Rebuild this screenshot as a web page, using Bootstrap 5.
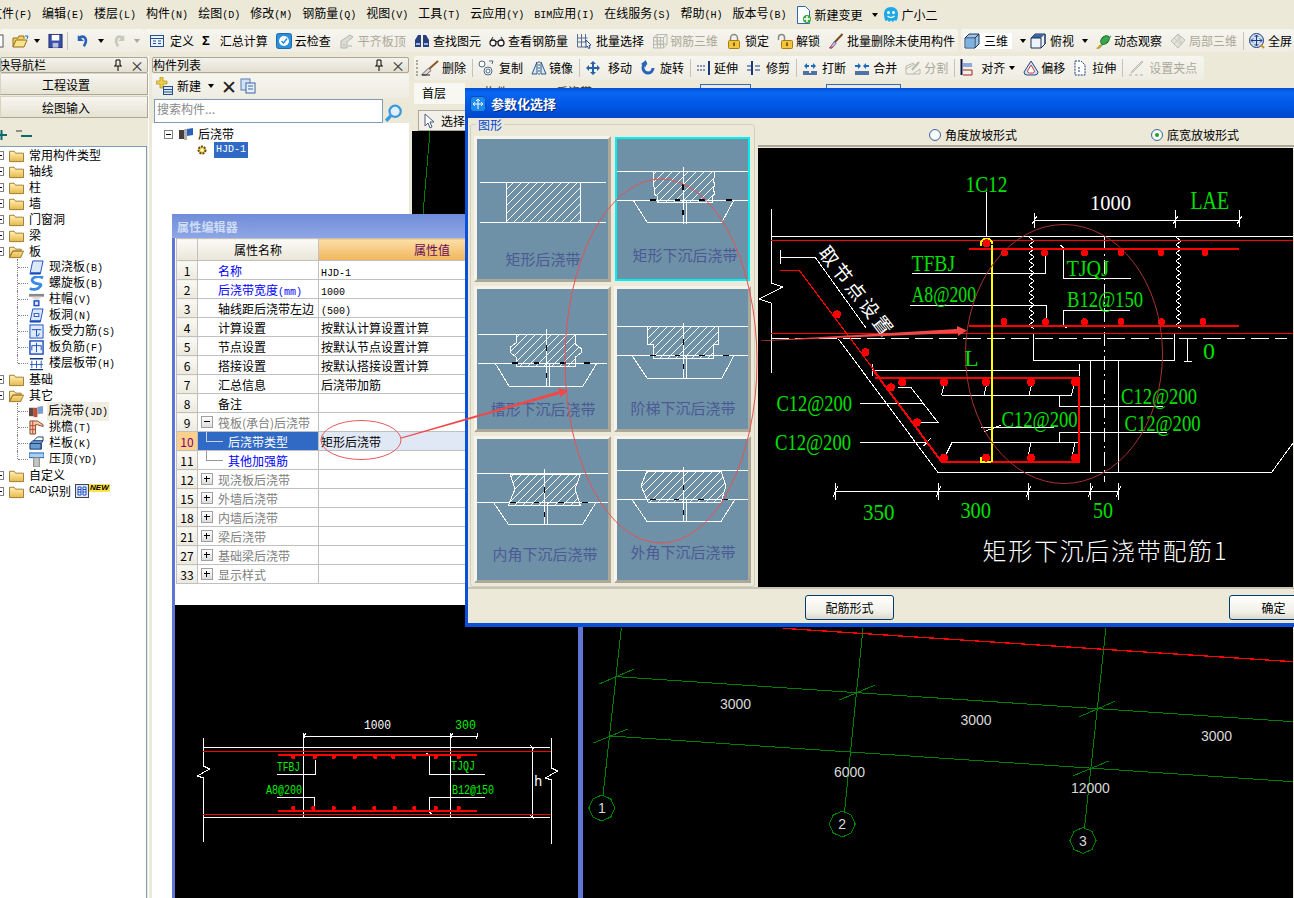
<!DOCTYPE html>
<html lang="zh-CN">
<head>
<meta charset="UTF-8">
<title>钢筋算量 - 后浇带</title>
<link href="https://cdn.jsdelivr.net/npm/bootstrap@5.3.2/dist/css/bootstrap.min.css" rel="stylesheet">
<style>
html,body{margin:0;height:898px;overflow:hidden}
body{position:relative;width:1294px;background:#ece9d8;color:#000;font:12px/16px "Noto Sans CJK SC","Liberation Sans",sans-serif}
svg{display:block;flex:none}
.gl-key{font:10px/16px "Liberation Mono",monospace}
.gl-menubar{height:29px;margin-left:-10px;gap:10px;white-space:nowrap}
.gl-menubar .gl-ic{margin-right:-8px}
.gl-menubar .gl-ic2{margin-left:-5px}
.gl-toolrow{height:27px;white-space:nowrap}
.gl-group{height:23px;background:linear-gradient(#f6f5ef,#efede2);border-radius:3px}
.gl-first{width:144px;flex:none}
.gl-mid{width:814px;flex:none;padding-left:5px;margin-right:3px}
.gl-last{flex:1;min-width:0;padding-left:3px}
.gl-tool{margin-right:8px;gap:2px;flex:none}
.gl-off{color:#aca899}
.gl-sep{width:1px;height:18px;background:#c5c2b8;margin:0 5px 0 -2px;flex:none}
.gl-drop{width:0;height:0;border:3px solid transparent;border-top:4px solid #000;border-bottom:0;flex:none}
.gl-drop-off{border-top-color:#aca899}
.gl-sigma{font:700 13px/16px "Liberation Sans",sans-serif}
.gl-work{height:842px}
.gl-left{width:148px}
.gl-titlebar{height:16px;margin-top:1px;border:1px solid #aca899;border-radius:2px;background:linear-gradient(#f4f3ec,#e3e0d0);padding-right:3px;line-height:14px;white-space:nowrap}
.gl-titlebar .gl-cross{margin-left:7px;font-size:14px;color:#333}
.gl-titleclip{margin-left:-3px}
.gl-navbtn{height:22px;border:1px solid #d8d4c4;border-bottom-color:#aca899;border-right-color:#aca899;background:linear-gradient(#f7f6f0,#e6e3d3);margin-bottom:1px;text-align:center;line-height:21px;padding:0 16px 0 0}
.gl-navtools{height:27px;padding:4px 0 0 0;gap:7px;color:#333}
.gl-tree{background:#fff;border:1px solid #7f9db9;border-left:0;border-bottom:0;margin:0 1px 0 0;padding:0;flex:1;list-style:none}
.gl-node{height:16px;white-space:nowrap}
.gl-box{width:9px;height:9px;border:1px solid #808080;background:#fff;margin:0 5px 0 -5px;flex:none;position:relative}
.gl-box::after{content:"";position:absolute;left:1px;right:1px;top:3px;height:1px;background:#000}
.gl-folder{margin-right:5px}
.gl-kids{list-style:none;margin:0;padding:0}
.gl-kid{position:relative;padding-left:29px;gap:5px}
.gl-kid::before{content:"";position:absolute;left:17px;top:0;bottom:0;border-left:1px dotted #808080}
.gl-kid:last-child::before{bottom:8px}
.gl-kid::after{content:"";position:absolute;left:18px;width:10px;top:8px;border-top:1px dotted #808080}
.gl-current{background:#f0eee2;padding:0 1px 0 1px;margin-left:-2px}
.gl-new{font:italic bold 8px/8px "Liberation Sans",sans-serif;background:#ffe34d;align-self:flex-start;padding:0 1px;margin-top:1px}
.gl-gutter{width:4px;background:#ece9d8;border-left:1px solid #fff}
.gl-list{width:257px;flex:none}
.gl-listtools{height:24px;margin-top:1px;background:linear-gradient(#f6f5ef,#efede2);padding-left:4px;gap:3px}
.gl-listtools .gl-x{font-size:19px;margin-left:4px;line-height:16px;color:#222}
.gl-searchrow{height:25px;padding:1px 0 0 2px;gap:2px}
.gl-search{width:229px;height:24px;border-radius:0;border:1px solid #7f9db9;padding:0 2px 5px;font-size:12px;min-height:0}
.gl-search::placeholder{color:#8a8a8a}
.gl-listtree{flex:1;background:#fff;padding-left:12px;padding-top:3px}
.gl-listnode{height:16px}
.gl-selected{background:#316ac5;color:#fff;padding:0 2px;font:10px/16px "Liberation Mono",monospace;margin-left:6px}
.gl-main{flex:1;min-width:0;padding-left:3px}
.gl-row3{height:24px;width:790px;margin-left:2px;padding-left:1px;white-space:nowrap;flex:none}
.gl-row3 .gl-grip{width:2px;height:16px;border-left:2px dotted #aca899;margin-right:3px;margin-left:1px;flex:none}
.gl-row4{height:27px;padding-top:3px;white-space:nowrap}
.gl-floorbox{width:51px;height:21px;margin-left:2px;background:#f8f7f2;padding:2px 0 0 8px;flex:none}
.gl-clip{margin-left:19px;margin-top:1px;height:4px;overflow:hidden;color:#333;flex:none}
.gl-clip2{margin-left:48px}
.gl-stub{width:51px;height:6px;margin-top:1px;border:1px solid #316ac5;border-bottom:0;margin-left:108px;flex:none}
.gl-stub2{width:75px;margin-left:75px}
.gl-row5{height:24px;padding-top:3px}
.gl-pick{height:21px;width:48px;margin-left:6px;border:1px solid #aca899;background:#f2f0e8;padding-left:4px;gap:2px}
.gl-canvas{background:#000;flex:1}
.gl-cad{shape-rendering:crispEdges}
.gl-cad text{dominant-baseline:central;shape-rendering:auto}
.gl-cad .gl-s{font-family:"Liberation Serif",serif}
.gl-cad .gl-m{font-family:"Liberation Mono",monospace}
.gl-cad .gl-a{font-family:"Liberation Sans",sans-serif}
.gl-cad .gl-c{font-family:"Noto Sans CJK SC",sans-serif}
.gl-wprops{position:absolute;left:172px;top:214px;width:411px;height:684px;background:#6075d6;padding:0 5px 0 3px}
.gl-wprops-title{height:24px;background:linear-gradient(#6f8dd8,#8ea6e6);margin:0 -5px 0 -3px;padding-left:5px;color:#cfdcf6;font-weight:700;font-size:12px;line-height:25px;letter-spacing:.2px}
.gl-sheet{height:367px;background:#fff;padding-left:1px}
.gl-props{width:402px;margin:0;table-layout:fixed;--bs-table-bg:transparent;border-collapse:collapse}
.gl-props th,.gl-props td{height:19px;padding:0 2px;border:1px solid #c0c0c0;font:12px/17px "Noto Sans CJK SC",sans-serif;white-space:nowrap;overflow:hidden;color:#000;vertical-align:middle}
.gl-props .gl-key{line-height:1}
.gl-props thead{vertical-align:middle}
.gl-props thead th{height:22px;font-weight:400;background:linear-gradient(#fbfaf6,#e9e6d8);text-align:center}
.gl-props thead th.gl-valhead{background:linear-gradient(#fcdfa8,#f0b55a);color:#6a0a5a;text-align:left;padding-left:95px}
.gl-props .gl-num{background:linear-gradient(#faf9f4,#ece9dc);text-align:center;padding:0;color:#000}
.gl-props .gl-nm{padding-left:20px}
.gl-props .gl-blue{color:#0000ff}
.gl-props .gl-grey{color:#808080}
.gl-rowhead{display:flex;align-items:center;padding-left:3px;gap:5px}
.gl-pm{width:12px;height:12px;border:1px solid #a0a0a0;background:linear-gradient(#fff,#ddd);position:relative;flex:none}
.gl-pm::before{content:"";position:absolute;left:2px;right:2px;top:4px;height:2px;background:none;border-top:1px solid #000}
.gl-plus::after{content:"";position:absolute;top:2px;bottom:2px;left:4px;border-left:1px solid #000}
.gl-props .gl-plainhead{padding:0}
.gl-props .gl-branch{padding:0 0 0 30px;position:relative}
.gl-branch::before{content:"";position:absolute;left:8px;top:-7px;bottom:8px;width:17px;border-left:1px solid #999;border-bottom:1px solid #999}
.gl-props .gl-active-num{background:#fbd08a;color:#800080}
.gl-props .gl-active-nm{background:#316ac5;color:#fff}
.gl-active-nm.gl-branch::before{border-color:#c8d4ee}
.gl-props .gl-active-val{background:#e0e8f5}
.gl-preview{flex:1;background:#000}
.gl-wparam{position:absolute;left:465px;top:88px;width:840px;height:539px;background:#ece9d8;border:3px solid #0a50d8;border-top:1px solid #0a50d8;border-bottom:4px solid #0a50d8}
.gl-wparam-title{height:29px;margin:0 -3px;padding-left:5px;gap:5px;background:linear-gradient(#0053e0 0,#0a66f0 12%,#0058e6 55%,#0047c8 100%);color:#fff;font-weight:700;font-size:13px;text-shadow:1px 1px 0 #0a2a80}
.gl-wparam-body{height:469px}
.gl-shapes{width:289px;flex:none;padding:6px 2px 0 2px;position:relative}
.gl-legend{position:absolute;left:8px;top:0;background:#ece9d8;color:#0046d5;padding:0 2px;line-height:14px}
.gl-fieldset{height:463px;border:1px solid #d0d0bf;border-radius:3px;padding:11px 0 0 3px}
.gl-tiles{display:grid;grid-template-columns:137px 137px;grid-template-rows:146px 146px 147px;gap:4px 3px}
.gl-tile{background:#6e91a8;border:3px solid #f5f3ea;border-right-color:#aca899;border-bottom-color:#aca899}
.gl-tile-on{border:2px solid #00f0f0;margin:1px}
.gl-tile text{font:15px "Noto Sans CJK SC",sans-serif;fill:#4b5a92;text-anchor:middle;dominant-baseline:central}
.gl-panel{flex:1;min-width:0;padding-top:1px}
.gl-radios{height:28px;padding:5px 0 0 171px;border-bottom:2px solid #aca899;margin-left:1px}
.gl-radio{width:12px;height:12px;border-radius:50%;border:1px solid #3a6ea5;background:radial-gradient(#fff 40%,#dcdcd0);flex:none;margin-right:4px;position:relative}
.gl-radio-on::after{content:"";position:absolute;left:3px;top:3px;width:4px;height:4px;border-radius:50%;background:#21a121}
.gl-radiolabel{margin-right:134px}
.gl-drawing{background:#000;margin-left:1px;margin-top:1px;flex:1}
.gl-footer{height:35px;border-top:2px solid #c8c5b4;padding:6px 0 0 337px}
.gl-xpbtn{width:89px;height:25px;flex:none;padding:0;border:1px solid #003c74;border-radius:3px;background:linear-gradient(#fff,#f1f0e8 70%,#dcd9c8);font-size:12px;line-height:22px;color:#000}
.gl-ok{margin-left:335px;padding-left:0}
.gl-notes{position:absolute;left:0;top:0;pointer-events:none}
</style>
</head>
<body>

<svg width="0" height="0" class="position-absolute">
  <defs>
    <pattern id="hatch" patternUnits="userSpaceOnUse" width="8" height="8"><path d="M-2 10 10-2M-2 2 2-2M6 10 10 6" stroke="#fff" stroke-width="1"/></pattern>
    <linearGradient id="fold" x1="0" y1="0" x2="0" y2="1"><stop offset="0" stop-color="#fff1b8"/><stop offset="1" stop-color="#e8b84a"/></linearGradient>
    <symbol id="i-folder" viewBox="0 0 16 16"><path d="M.5 3.5h5l1.5 2h8.500v9H.5z" fill="url(#fold)" stroke="#9a7a2a"/></symbol>
    <symbol id="i-open" viewBox="0 0 16 16"><path d="M.5 3.500h5l1.500 2h6v2H4L.5 14.500zM.5 14.500 4 7.500h11.500l-3 7z" fill="url(#fold)" stroke="#9a7a2a"/></symbol>
    <symbol id="i-define" viewBox="0 0 16 16" preserveAspectRatio="xMinYMid"><rect x="1.500" y="2.500" width="13" height="11" fill="#eaf2fb" stroke="#24508e"/><path d="M1.500 5.500h13M4 8h3M4 10.500h3M9 8h3M9 10.500h3" stroke="#24508e"/></symbol>
    <symbol id="i-cloud" viewBox="0 0 16 16" preserveAspectRatio="xMinYMid"><rect x=".5" y=".5" width="15" height="15" rx="2" fill="#2c8fdc" stroke="#1a6ab0"/><circle cx="8" cy="8" r="5" fill="#fff"/><path d="M5.500 8 7.500 10 11 5.500" stroke="#2c8fdc" stroke-width="1.500" fill="none"/></symbol>
    <symbol id="i-align" viewBox="0 0 16 16" preserveAspectRatio="xMinYMid"><path d="M2 15V8l9-6 3 2-6 5v6z" fill="#dcdcd4" stroke="#b5b5aa"/><path d="M4 12h2M9 13h4" stroke="#b5b5aa"/></symbol>
    <symbol id="i-binoc" viewBox="0 0 16 16" preserveAspectRatio="xMinYMid"><path d="M4 2h3v12H1V7zM9 2h3l3 5v7H9z" fill="#28407e"/><path d="M2 11h4M10 11h4" stroke="#9fb6e4" stroke-width="2"/></symbol>
    <symbol id="i-glass" viewBox="0 0 16 16" preserveAspectRatio="xMinYMid"><circle cx="4" cy="10" r="3" fill="#fff" stroke="#222" stroke-width="1.300"/><circle cx="12" cy="10" r="3" fill="#fff" stroke="#222" stroke-width="1.300"/><path d="M7 9q1-1 2 0M1.500 8 4 4M14.500 8 12 4" stroke="#222" fill="none"/></symbol>
    <symbol id="i-batch" viewBox="0 0 16 16" preserveAspectRatio="xMinYMid"><path d="M1.500 1v13h9M1.500 5h10M1.500 9h10M5.500 1v13M9.500 1v8" stroke="#5a6f90" fill="none"/><path d="M10 7l5 5-2 .5 1 2.500-1.500.5-1-2.500-1.500 1.500z" fill="#fff" stroke="#2a4a90"/></symbol>
    <symbol id="i-rebar" viewBox="0 0 16 16" preserveAspectRatio="xMinYMid"><path d="M1.500 4.500 5 1.500h10v10L11.500 15h-10zM1.500 4.500h10V15M11.500 4.500 15 1.500M5 1.500V11h10M1.500 8h10M1.500 11.500h10M5.500 4.500V15M8.500 4.500V15" stroke="#b9b9ae" fill="none"/></symbol>
    <symbol id="i-lock" viewBox="0 0 16 16" preserveAspectRatio="xMinYMid"><path d="M4.500 8V5a3.500 3.500 0 0 1 7 0v3" fill="none" stroke="#8a8a80" stroke-width="1.500"/><rect x="2.500" y="7.500" width="11" height="8" rx="1" fill="#f2c53d" stroke="#a67c10"/><path d="M8 9.500v3.500" stroke="#5a4000" stroke-width="1.500"/></symbol>
    <symbol id="i-unlock" viewBox="0 0 16 16" preserveAspectRatio="xMinYMid"><path d="M1.500 7V4.500a3 3 0 0 1 6 0V8" fill="none" stroke="#8a8a80" stroke-width="1.500"/><rect x="4.500" y="7.500" width="11" height="8" rx="1" fill="#f2c53d" stroke="#a67c10"/><path d="M10 9.500v3.500" stroke="#5a4000" stroke-width="1.500"/></symbol>
    <symbol id="i-brush" viewBox="0 0 16 16" preserveAspectRatio="xMinYMid"><path d="M14.500 1 6 10" stroke="#7a4a20" stroke-width="2"/><path d="M6.500 8.500 8 10.500 4 15H1.500z" fill="#e9c8d4" stroke="#5060b0"/><path d="M2 15l3-1" stroke="#e04040" stroke-width="1.500"/></symbol>
    <symbol id="i-cube" viewBox="0 0 16 16" preserveAspectRatio="xMinYMid"><path d="M1 5l4-4h10v10l-4 4H1z" fill="#9cc4e8" stroke="#1c2f50"/><path d="M1 5h10v10M11 5l4-4" stroke="#1c2f50" fill="none"/><path d="M1.500 5.500h9v9h-9z" fill="#7fb2de"/></symbol>
    <symbol id="i-top" viewBox="0 0 16 16" preserveAspectRatio="xMinYMid"><path d="M1 5l4-4h10v10l-4 4H1z" fill="#eef4fb" stroke="#1c2f50"/><path d="M1 5l4-4h10l-4 4z" fill="#3a689e"/><path d="M11 5v10l4-4V1M1 5h10" stroke="#1c2f50" fill="none"/></symbol>
    <symbol id="i-orbit" viewBox="0 0 16 16" preserveAspectRatio="xMinYMid"><path d="M3 15 15 3" stroke="#58a8a0" stroke-width="1.500"/><ellipse cx="9" cy="7" rx="5" ry="3.500" transform="rotate(-45 9 7)" fill="#3aa84a" stroke="#1c6a2a"/><path d="M1 16l4-4" stroke="#d0a020" stroke-width="2"/></symbol>
    <symbol id="i-local" viewBox="0 0 16 16" preserveAspectRatio="xMinYMid"><path d="M8 1l7 6-7 8-7-7z" fill="#e2e2da" stroke="#bcbcb0"/><path d="M4 5l8 7M8 2l4 10M12 3 4 11" stroke="#c8c8bc"/></symbol>
    <symbol id="i-full" viewBox="0 0 16 16" preserveAspectRatio="xMinYMid"><circle cx="7.500" cy="7.500" r="7" fill="#cfe0f6" stroke="#1e3a7a"/><path d="M7.500 2v11M2 7.500h11" stroke="#1e3a7a"/><path d="M5.500 4 7.500 2l2 2M5.500 11l2 2 2-2M4 5.500l-2 2 2 2M11 5.500l2 2-2 2" fill="none" stroke="#1e3a7a"/><path d="M12 12l3 3" stroke="#d09020" stroke-width="2"/></symbol>
    <symbol id="i-doc" viewBox="0 0 16 18"><path d="M1.500 .5h8l4 4v13h-12z" fill="#fff" stroke="#2c68b0"/><circle cx="11" cy="13" r="4" fill="#3aa83a"/><path d="M11 10v6M8 13h6" stroke="#fff" stroke-width="1.500"/></symbol>
    <symbol id="i-smile" viewBox="0 0 16 18"><path d="M8 1c4.500 0 7 3 7 7 0 3-1 7-2 7l-1.500-1-1.500 2-2-1.500L6 16l-1.500-2L3 15c-1 0-2-4-2-7 0-4 2.500-7 7-7z" fill="#1fa8e8"/><circle cx="5.500" cy="6.500" r="1.500" fill="#fff"/><circle cx="10.500" cy="6.500" r="1.500" fill="#fff"/><path d="M4.500 10q3.500 3 7 0" stroke="#fff" stroke-width="1.200" fill="none"/></symbol>
    <symbol id="i-save" viewBox="0 0 16 16"><rect x="1" y="1" width="14" height="14" fill="#3a50a8" stroke="#202c70"/><rect x="4" y="1.500" width="8" height="6" fill="#fff"/><rect x="5" y="10" width="6" height="5" fill="#b8c0dc"/></symbol>
    <symbol id="i-openfile" viewBox="0 0 18 16"><path d="M1 14V5h5l1-2h5v3" fill="#f4cf5e" stroke="#90701c"/><path d="M1 14l3-7h11l-3 7z" fill="#fbe28c" stroke="#90701c"/><path d="M13 3l3 0-1 3" stroke="#2a70c0" fill="none"/></symbol>
    <symbol id="i-undo" viewBox="0 0 16 16"><path d="M4 4c6-3 10 2 5 10" fill="none" stroke="#2a62b8" stroke-width="3"/><path d="M2 1v7h7z" fill="#2a62b8"/></symbol>
    <symbol id="i-redo" viewBox="0 0 16 16"><path d="M12 4C6 1 2 6 7 14" fill="none" stroke="#c8c8bc" stroke-width="3"/><path d="M14 1v7H7z" fill="#c8c8bc"/></symbol>
    <symbol id="i-erase" viewBox="0 0 18 16" preserveAspectRatio="xMinYMid"><path d="M17 1 8 9" stroke="#8a5a20" stroke-width="2"/><path d="M7.500 8 10 10.500 5 15H.5z" fill="#f0d8a8" stroke="#5060b0"/><path d="M1 15h8" stroke="#222"/></symbol>
    <symbol id="i-copy" viewBox="0 0 16 16" preserveAspectRatio="xMinYMid"><circle cx="4" cy="4" r="3" fill="#fff" stroke="#4a6a8a"/><circle cx="10" cy="11" r="4" fill="#fff" stroke="#4a6a8a"/><circle cx="10" cy="11" r="2" fill="none" stroke="#4a6a8a"/><path d="M11 1l4 0-1 3" stroke="#4a6a8a" fill="none"/></symbol>
    <symbol id="i-mirror" viewBox="0 0 16 16" preserveAspectRatio="xMinYMid"><path d="M1 14 6 2v12zM15 14 10 2v12z" fill="#dce8f4" stroke="#2a5a8a"/><path d="M8 1v14" stroke="#2a5a8a" stroke-dasharray="2 1"/></symbol>
    <symbol id="i-move" viewBox="0 0 16 16" preserveAspectRatio="xMinYMid"><path d="M8 1l3 3H9v3h3V5l3 3-3 3V9H9v3h2l-3 3-3-3h2V9H4v2L1 8l3-3v2h3V4H5z" fill="#2a62a8"/></symbol>
    <symbol id="i-rotate" viewBox="0 0 16 16" preserveAspectRatio="xMinYMid"><path d="M13 8a5 5 0 1 1-6-5" fill="none" stroke="#2a62b8" stroke-width="3"/><path d="M6 0v7l-5-3z" fill="#2a62b8"/></symbol>
    <symbol id="i-extend" viewBox="0 0 16 16" preserveAspectRatio="xMinYMid"><path d="M13 1v14" stroke="#1a3a80" stroke-width="2"/><path d="M1 6h9M1 10h9" stroke="#1a3a80" stroke-dasharray="2 1"/></symbol>
    <symbol id="i-trim" viewBox="0 0 16 16" preserveAspectRatio="xMinYMid"><path d="M6 1v14" stroke="#1a3a80" stroke-width="2"/><path d="M1 6h14M1 10h14" stroke="#1a3a80" stroke-dasharray="5 3"/></symbol>
    <symbol id="i-break" viewBox="0 0 16 16" preserveAspectRatio="xMinYMid"><path d="M1 12h6M9 12h6M1 14h14" stroke="#1a4a90" stroke-width="1.500"/><path d="M2 6l3-3v2h2v2H5v2zM14 6l-3-3v2H9v2h2v2z" fill="#1a6ac0"/></symbol>
    <symbol id="i-merge" viewBox="0 0 16 16" preserveAspectRatio="xMinYMid"><path d="M1 12h14M1 14h14" stroke="#1a4a90" stroke-width="1.500"/><path d="M7 6 4 3v2H1v2h3v2zM9 6l3-3v2h3v2h-3v2z" fill="#1a6ac0"/></symbol>
    <symbol id="i-split" viewBox="0 0 16 16" preserveAspectRatio="xMinYMid"><path d="M1 14h14v-5L8 14M1 14V6l8-3M1 9l9-5" stroke="#b9b9ae" fill="none"/><path d="M14 2 7 10" stroke="#b9b9ae" stroke-width="2"/></symbol>
    <symbol id="i-alignr" viewBox="0 0 14 18" preserveAspectRatio="xMinYMid"><path d="M1.500 0v16" stroke="#101840" stroke-width="2"/><path d="M3 5h9M3 7h9" stroke="#2a62c8"/><path d="M3 11h9M3 16h9M12 11v5" stroke="#a02020" fill="none"/></symbol>
    <symbol id="i-offset" viewBox="0 0 16 16" preserveAspectRatio="xMinYMid"><path d="M8 1 15 12q0 3-3 3H4q-3 0-3-3z" fill="#cfe0f2" stroke="#224a80"/><path d="M8 5l3.500 6q0 2-2 2h-3q-2 0-2-2z" fill="#fff" stroke="#d04040"/></symbol>
    <symbol id="i-stretch" viewBox="0 0 16 16" preserveAspectRatio="xMinYMid"><path d="M2 1h6l4 4v10H2z" fill="#fff" stroke="#123a70" stroke-dasharray="2 1"/><path d="M5 8h2M5 11h2" stroke="#123a70"/></symbol>
    <symbol id="i-grips" viewBox="0 0 16 16" preserveAspectRatio="xMinYMid"><path d="M14 1 5 10l-2 3 3-2 9-9z" fill="#ddd" stroke="#bcbcb0"/><path d="M1 15h3M7 15h3M12 15h3" stroke="#b5b5aa"/></symbol>
    <symbol id="i-slab" viewBox="0 0 16 16" preserveAspectRatio="xMinYMid"><path d="M4 1h11l-3 14H1z" fill="#dbe9fa" stroke="#1a4ac0"/><path d="M1 15h11l.5-2H2z" fill="#1a4ac0"/></symbol>
    <symbol id="i-spiral" viewBox="0 0 16 16" preserveAspectRatio="xMinYMid"><path d="M15 2C9-1 1 2 4 6s11 1 8 5-9 4-11 2" fill="none" stroke="#3a8ae8" stroke-width="3"/></symbol>
    <symbol id="i-cap" viewBox="0 0 16 16" preserveAspectRatio="xMinYMid"><path d="M0 2h16v3H0z" fill="#8a8a8a"/><path d="M2 5h12L9 9H7z" fill="#dcdcdc"/><rect x="5.500" y="9.500" width="5" height="5" fill="#dbe9fa" stroke="#1a4ac0" stroke-width="1.500"/></symbol>
    <symbol id="i-hole" viewBox="0 0 16 16" preserveAspectRatio="xMinYMid"><path d="M4 1h11l-3 14H1z" fill="#dbe9fa" stroke="#1a4ac0"/><rect x="5.500" y="6" width="5" height="3" fill="#fff" stroke="#1a4ac0"/><path d="M1 15h11l.5-2H2z" fill="#1a4ac0"/></symbol>
    <symbol id="i-force" viewBox="0 0 16 16" preserveAspectRatio="xMinYMid"><rect x="1" y="1" width="14" height="14" fill="#dbe9fa" stroke="#1a4ac0"/><path d="M3 6h10M8 6v7q3 0 3-3" stroke="#1a4ac0" fill="none"/></symbol>
    <symbol id="i-neg" viewBox="0 0 16 16" preserveAspectRatio="xMinYMid"><rect x="1" y="1" width="14" height="14" fill="#eef4fb" stroke="#1a4ac0" stroke-width="1.500"/><path d="M3 6h10v5M3 6v5M8 3v10" stroke="#1a4ac0" fill="none"/></symbol>
    <symbol id="i-band" viewBox="0 0 16 16" preserveAspectRatio="xMinYMid"><path d="M1 3h14M1 14.500h14" stroke="#123a80" stroke-width="1.500"/><path d="M3 5v8M8 5v8M13 5v8M1 9h14" stroke="#2a5ac0"/></symbol>
    <symbol id="i-jd" viewBox="0 0 16 16" preserveAspectRatio="xMinYMid"><path d="M0 4h5v9H0z" fill="#5a4a40"/><path d="M5 4h4v10H5z" fill="#c84a30"/><path d="M9 3l6-1v8l-6 1z" fill="#7aa0d0"/></symbol>
    <symbol id="i-eave" viewBox="0 0 16 16" preserveAspectRatio="xMinYMid"><path d="M1 1h8l6 4v2L9 5H7v10H1z" fill="#f4c8a8" stroke="#7a4a30"/><path d="M1 6h6M1 10h6M4 1v14" stroke="#c04030"/></symbol>
    <symbol id="i-rail" viewBox="0 0 16 16" preserveAspectRatio="xMinYMid"><path d="M1 8l3-3h11l-2 3v6H1z" fill="#6a9ad0" stroke="#123a70"/><path d="M1 8h12M13 8v6" stroke="#123a70"/><path d="M5 5 9 1h6v4" fill="none" stroke="#123a70"/></symbol>
    <symbol id="i-para" viewBox="0 0 16 16" preserveAspectRatio="xMinYMid"><path d="M0 1h16v5H0z" fill="#a8d0f0" stroke="#1a5ac0"/><rect x="5" y="6" width="6" height="10" fill="#c4c4c4" stroke="#808080"/></symbol>
    <symbol id="i-cadfile" viewBox="0 0 14 14" preserveAspectRatio="xMinYMid"><rect x=".5" y=".5" width="13" height="13" fill="#dce8f8" stroke="#444"/><path d="M3 3h3v8H3zM8 3h3v8H8zM3 5.500h3M3 8h3M8 5.500h3M8 8h3" fill="#fff" stroke="#1a4ac0"/></symbol>
    <symbol id="i-plus" viewBox="0 0 18 18" preserveAspectRatio="xMinYMid"><path d="M4 0h3v4h4v3H7v4H4V7H0V4h4z" fill="#f0d040" stroke="#9a8020" stroke-width=".6"/><rect x="7.500" y="9.500" width="9" height="8" fill="#dbe8f8" stroke="#24508e"/><path d="M7.500 12.500h9M7.500 15h9" stroke="#24508e"/></symbol>
    <symbol id="i-dup" viewBox="0 0 16 16"><rect x="1" y="1" width="9" height="11" fill="#cfe2f8" stroke="#5a7ab0"/><rect x="6" y="5" width="9" height="10" fill="#e8f1fc" stroke="#3a62a0"/><path d="M8 8h5M8 11h5" stroke="#3a62a0"/></symbol>
    <symbol id="i-mag" viewBox="0 0 16 16"><circle cx="9" cy="6.500" r="5" fill="#e0f0fc" stroke="#3a9ae0" stroke-width="2"/><path d="M5 10.500 1 15" stroke="#3a9ae0" stroke-width="3"/></symbol>
    <symbol id="i-pin" viewBox="0 0 10 12"><path d="M3 1h4v5l1.500 1h-7L3 6zM5 7v5" fill="none" stroke="#000"/></symbol>
    <symbol id="i-gear" viewBox="0 0 12 12"><circle cx="6" cy="6" r="3.500" fill="#f2d040" stroke="#604800" stroke-width="2" stroke-dasharray="2 1"/><circle cx="6" cy="6" r="1.500" fill="#fff"/></symbol>
    <symbol id="i-jdtree" viewBox="0 0 16 14"><path d="M1 3h5v9H1z" fill="#4a3f38"/><path d="M6 2h3v11H6z" fill="#b0b0b0"/><path d="M9 2l6-1v7l-6 1z" fill="#2a62b8"/></symbol>
    <symbol id="i-param" viewBox="0 0 16 16"><rect x=".5" y=".5" width="15" height="15" rx="3" fill="#1a8aee" stroke="#0a4ac0"/><path d="M8 3v10M3 8h10M6 5l2-2 2 2M5 6 3 8l2 2M11 6l2 2-2 2" stroke="#fff" fill="none"/></symbol>
    <symbol id="i-arrowpick" viewBox="0 0 12 16"><path d="M2 1v12l3-3 2 5 2-1-2-5h4z" fill="#fff" stroke="#4a5a80"/></symbol>
  </defs>
</svg>

<div class="gl-menubar d-flex align-items-center">
  <span>文件<span class="gl-key">(F)</span></span>
  <span>编辑<span class="gl-key">(E)</span></span>
  <span>楼层<span class="gl-key">(L)</span></span>
  <span>构件<span class="gl-key">(N)</span></span>
  <span>绘图<span class="gl-key">(D)</span></span>
  <span>修改<span class="gl-key">(M)</span></span>
  <span>钢筋量<span class="gl-key">(Q)</span></span>
  <span>视图<span class="gl-key">(V)</span></span>
  <span>工具<span class="gl-key">(T)</span></span>
  <span>云应用<span class="gl-key">(Y)</span></span>
  <span><span class="gl-key">BIM</span>应用<span class="gl-key">(I)</span></span>
  <span>在线服务<span class="gl-key">(S)</span></span>
  <span>帮助<span class="gl-key">(H)</span></span>
  <span>版本号<span class="gl-key">(B)</span></span>
  <svg width="16" height="18" class="gl-ic"><use href="#i-doc"/></svg>
  <span>新建变更</span>
  <span class="gl-drop"></span>
  <svg width="16" height="18" class="gl-ic gl-ic2"><use href="#i-smile"/></svg>
  <span>广小二</span>
</div>

<div class="gl-toolrow d-flex">
  <div class="gl-group gl-first d-flex align-items-center">
    <svg width="8" height="16" class="me-1"><rect x="-8" y="2" width="11" height="12" fill="#fff" stroke="#555"/></svg>
    <svg width="18" height="16"><use href="#i-openfile"/></svg>
    <span class="gl-drop ms-1"></span>
    <svg width="15" height="16" class="ms-2"><use href="#i-save"/></svg>
    <span class="gl-sep ms-1 me-1"></span>
    <svg width="14" height="16" class="ms-1"><use href="#i-undo"/></svg>
    <span class="gl-drop ms-2"></span>
    <svg width="14" height="16" class="ms-2"><use href="#i-redo"/></svg>
    <span class="gl-drop gl-drop-off ms-2"></span>
  </div>
  <div class="gl-group gl-mid d-flex align-items-center">
    <span class="gl-tool d-flex align-items-center"><svg width="19" height="16"><use href="#i-define"/></svg>定义</span>
    <span class="gl-tool d-flex align-items-center"><b class="gl-sigma me-1">Σ</b><span class="ms-1">汇总计算</span></span>
    <span class="gl-tool d-flex align-items-center"><svg width="17" height="16"><use href="#i-cloud"/></svg>云检查</span>
    <span class="gl-tool gl-off d-flex align-items-center"><svg width="17" height="16"><use href="#i-align"/></svg>平齐板顶</span>
    <span class="gl-tool d-flex align-items-center"><svg width="17" height="16"><use href="#i-binoc"/></svg>查找图元</span>
    <span class="gl-tool d-flex align-items-center"><svg width="17" height="16"><use href="#i-glass"/></svg>查看钢筋量</span>
    <span class="gl-tool d-flex align-items-center"><svg width="18" height="16"><use href="#i-batch"/></svg>批量选择</span>
    <span class="gl-tool gl-off d-flex align-items-center"><svg width="16" height="16"><use href="#i-rebar"/></svg>钢筋三维</span>
    <span class="gl-tool d-flex align-items-center"><svg width="17" height="16"><use href="#i-lock"/></svg>锁定</span>
    <span class="gl-tool d-flex align-items-center"><svg width="17" height="16"><use href="#i-unlock"/></svg>解锁</span>
    <span class="gl-tool d-flex align-items-center"><svg width="17" height="16"><use href="#i-brush"/></svg>批量删除未使用构件</span>
  </div>
  <div class="gl-group gl-last d-flex align-items-center">
    <span class="gl-tool d-flex align-items-center bg-white pe-1 me-1"><svg width="18" height="16"><use href="#i-cube"/></svg>三维</span>
    <span class="gl-drop ms-1"></span>
    <span class="gl-tool d-flex align-items-center ms-1 me-2"><svg width="18" height="16"><use href="#i-top"/></svg>俯视</span>
    <span class="gl-drop"></span>
    <span class="gl-tool d-flex align-items-center ms-2"><svg width="16" height="16"><use href="#i-orbit"/></svg>动态观察</span>
    <span class="gl-tool gl-off d-flex align-items-center"><svg width="17" height="16"><use href="#i-local"/></svg>局部三维</span>
    <span class="gl-sep"></span>
    <span class="gl-tool d-flex align-items-center"><svg width="17" height="16"><use href="#i-full"/></svg>全屏</span>
  </div>
</div>

<div class="gl-work d-flex">
  <aside class="gl-left d-flex flex-column">
    <div class="gl-titlebar d-flex align-items-center"><span class="flex-grow-1 overflow-hidden text-nowrap"><span class="d-block gl-titleclip">快导航栏</span></span><svg width="10" height="12"><use href="#i-pin"/></svg><span class="gl-cross">×</span></div>
    <div class="gl-navbtn">工程设置</div>
    <div class="gl-navbtn">绘图输入</div>
    <div class="gl-navtools d-flex align-items-center">
      <svg width="8" height="12"><path d="M-4 6h11M1.500 1v10" stroke="#0a6a6a" stroke-width="2"/></svg>
      <svg width="18" height="12"><path d="M1 2h6" stroke="#333"/><path d="M6 7h11" stroke="#0a6a6a" stroke-width="2"/></svg>
    </div>
    <ul class="gl-tree">
      <li class="gl-node d-flex align-items-center"><span class="gl-box"></span><svg class="gl-folder" width="15" height="15"><use href="#i-folder"/></svg>常用构件类型</li>
      <li class="gl-node d-flex align-items-center"><span class="gl-box"></span><svg class="gl-folder" width="15" height="15"><use href="#i-folder"/></svg>轴线</li>
      <li class="gl-node d-flex align-items-center"><span class="gl-box"></span><svg class="gl-folder" width="15" height="15"><use href="#i-folder"/></svg>柱</li>
      <li class="gl-node d-flex align-items-center"><span class="gl-box"></span><svg class="gl-folder" width="15" height="15"><use href="#i-folder"/></svg>墙</li>
      <li class="gl-node d-flex align-items-center"><span class="gl-box"></span><svg class="gl-folder" width="15" height="15"><use href="#i-folder"/></svg>门窗洞</li>
      <li class="gl-node d-flex align-items-center"><span class="gl-box"></span><svg class="gl-folder" width="15" height="15"><use href="#i-folder"/></svg>梁</li>
      <li class="gl-node d-flex align-items-center"><span class="gl-box"></span><svg class="gl-folder" width="15" height="15"><use href="#i-open"/></svg>板</li>
      <li>
        <ul class="gl-kids">
          <li class="gl-node gl-kid d-flex align-items-center"><svg width="15" height="15"><use href="#i-slab"/></svg><span>现浇板<span class="gl-key">(B)</span></span></li>
          <li class="gl-node gl-kid d-flex align-items-center"><svg width="15" height="15"><use href="#i-spiral"/></svg><span>螺旋板<span class="gl-key">(B)</span></span></li>
          <li class="gl-node gl-kid d-flex align-items-center"><svg width="15" height="15"><use href="#i-cap"/></svg><span>柱帽<span class="gl-key">(V)</span></span></li>
          <li class="gl-node gl-kid d-flex align-items-center"><svg width="15" height="15"><use href="#i-hole"/></svg><span>板洞<span class="gl-key">(N)</span></span></li>
          <li class="gl-node gl-kid d-flex align-items-center"><svg width="15" height="15"><use href="#i-force"/></svg><span>板受力筋<span class="gl-key">(S)</span></span></li>
          <li class="gl-node gl-kid d-flex align-items-center"><svg width="15" height="15"><use href="#i-neg"/></svg><span>板负筋<span class="gl-key">(F)</span></span></li>
          <li class="gl-node gl-kid d-flex align-items-center"><svg width="15" height="15"><use href="#i-band"/></svg><span>楼层板带<span class="gl-key">(H)</span></span></li>
        </ul>
      </li>
      <li class="gl-node d-flex align-items-center"><span class="gl-box"></span><svg class="gl-folder" width="15" height="15"><use href="#i-folder"/></svg>基础</li>
      <li class="gl-node d-flex align-items-center"><span class="gl-box"></span><svg class="gl-folder" width="15" height="15"><use href="#i-open"/></svg>其它</li>
      <li>
        <ul class="gl-kids">
          <li class="gl-node gl-kid d-flex align-items-center"><svg width="15" height="15"><use href="#i-jd"/></svg><span class="gl-current">后浇带<span class="gl-key">(JD)</span></span></li>
          <li class="gl-node gl-kid d-flex align-items-center"><svg width="15" height="15"><use href="#i-eave"/></svg><span>挑檐<span class="gl-key">(T)</span></span></li>
          <li class="gl-node gl-kid d-flex align-items-center"><svg width="15" height="15"><use href="#i-rail"/></svg><span>栏板<span class="gl-key">(K)</span></span></li>
          <li class="gl-node gl-kid d-flex align-items-center"><svg width="15" height="15"><use href="#i-para"/></svg><span>压顶<span class="gl-key">(YD)</span></span></li>
        </ul>
      </li>
      <li class="gl-node d-flex align-items-center"><span class="gl-box"></span><svg class="gl-folder" width="15" height="15"><use href="#i-folder"/></svg>自定义</li>
      <li class="gl-node d-flex align-items-center"><span class="gl-box"></span><svg class="gl-folder" width="15" height="15"><use href="#i-folder"/></svg><span class="gl-key">CAD</span>识别<svg width="14" height="14" class="ms-1"><use href="#i-cadfile"/></svg><span class="gl-new">NEW</span></li>
    </ul>
  </aside>
  <div class="gl-gutter"></div>
  <section class="gl-list d-flex flex-column">
    <div class="gl-titlebar d-flex align-items-center"><span class="flex-grow-1">构件列表</span><svg width="10" height="12"><use href="#i-pin"/></svg><span class="gl-cross">×</span></div>
    <div class="gl-listtools d-flex align-items-center">
      <svg width="18" height="18"><use href="#i-plus"/></svg>新建<span class="gl-drop ms-1"></span>
      <span class="gl-x">✕</span>
      <svg width="16" height="16"><use href="#i-dup"/></svg>
    </div>
    <div class="gl-searchrow d-flex">
      <input class="form-control gl-search" placeholder="搜索构件...">
      <svg width="18" height="20" class="mt-1"><use href="#i-mag"/></svg>
    </div>
    <div class="gl-listtree">
      <div class="gl-listnode d-flex align-items-center"><span class="gl-box ms-0"></span><svg width="16" height="14" class="me-1"><use href="#i-jdtree"/></svg>后浇带</div>
      <div class="gl-listnode d-flex align-items-center ps-4 position-relative"><svg width="12" height="12" class="ms-2"><use href="#i-gear"/></svg><span class="gl-selected">HJD-1</span></div>
    </div>
  </section>
  <div class="gl-main d-flex flex-column">
    <div class="gl-row3 gl-group d-flex align-items-center">
      <span class="gl-grip"></span>
      <span class="gl-tool d-flex align-items-center"><svg width="19" height="16"><use href="#i-erase"/></svg>删除</span>
      <span class="gl-sep"></span>
      <span class="gl-tool d-flex align-items-center"><svg width="19" height="16"><use href="#i-copy"/></svg>复制</span>
      <span class="gl-tool d-flex align-items-center"><svg width="16" height="16"><use href="#i-mirror"/></svg>镜像</span>
      <span class="gl-sep"></span>
      <span class="gl-tool d-flex align-items-center"><svg width="21" height="16"><use href="#i-move"/></svg>移动</span>
      <span class="gl-tool d-flex align-items-center"><svg width="18" height="16"><use href="#i-rotate"/></svg>旋转</span>
      <span class="gl-sep"></span>
      <span class="gl-tool d-flex align-items-center"><svg width="16" height="16"><use href="#i-extend"/></svg>延伸</span>
      <span class="gl-tool d-flex align-items-center"><svg width="18" height="16"><use href="#i-trim"/></svg>修剪</span>
      <span class="gl-sep"></span>
      <span class="gl-tool d-flex align-items-center"><svg width="18" height="16"><use href="#i-break"/></svg>打断</span>
      <span class="gl-tool d-flex align-items-center"><svg width="17" height="16"><use href="#i-merge"/></svg>合并</span>
      <span class="gl-tool gl-off d-flex align-items-center"><svg width="17" height="16"><use href="#i-split"/></svg>分割</span>
      <span class="gl-sep"></span>
      <span class="gl-tool d-flex align-items-center me-1"><svg width="19" height="18"><use href="#i-alignr"/></svg>对齐</span>
      <span class="gl-drop me-2"></span>
      <span class="gl-tool d-flex align-items-center"><svg width="16" height="16"><use href="#i-offset"/></svg>偏移</span>
      <span class="gl-tool d-flex align-items-center"><svg width="17" height="16"><use href="#i-stretch"/></svg>拉伸</span>
      <span class="gl-sep"></span>
      <span class="gl-tool gl-off d-flex align-items-center"><svg width="19" height="16"><use href="#i-grips"/></svg>设置夹点</span>
    </div>
    <div class="gl-row4 d-flex align-items-start">
      <span class="gl-floorbox">首层</span>
      <span class="gl-clip">构件</span>
      <span class="gl-clip gl-clip2">后浇带</span>
      <span class="gl-stub"></span>
      <span class="gl-stub gl-stub2"></span>
    </div>
    <div class="gl-row5 d-flex align-items-start">
      <span class="gl-pick d-flex align-items-center"><svg width="12" height="16"><use href="#i-arrowpick"/></svg><span class="ms-1 text-nowrap">选择</span></span>
    </div>
    <svg class="gl-canvas gl-cad" width="881" height="767" viewBox="413 131 881 767">
      <g fill="none">
        <path d="M431 131 424 214" stroke="#008000"/>
        <path d="M622.300 628.300 604 795M864 628 845.500 811.700M1106.900 628 1085.500 827.700M618.700 676.700 1294 721.700M612 736 1294 781.700M599.600 684.300 634.600 669.300M840.500 700 876 685M1080.500 716.700 1116.400 701M593.700 743.300 628.700 729M1074.500 775.700 1109.600 761" stroke="#008000"/>
        <path d="M784 628.300 1294 661.700" stroke="#f00" stroke-width="1.300"/>
        <path d="M602.800 795l9 4 4 9-4 9-9 4-9-4-4-9 4-9zM843.200 811l9 4 4 9-4 9-9 4-9-4-4-9 4-9zM1084 827.500l9 4 4 9-4 9-9 4-9-4-4-9 4-9z" stroke="#008000"/>
      </g>
      <g class="gl-a" fill="#d8d8d8" font-size="14" text-anchor="middle">
        <text x="736.600" y="704.300">3000</text>
        <text x="977" y="720.300">3000</text>
        <text x="1217.500" y="736.300">3000</text>
        <text x="850.500" y="772">6000</text>
        <text x="1091.400" y="788.300">12000</text>
        <text x="602.800" y="808.300">1</text>
        <text x="843.200" y="824.300">2</text>
        <text x="1084" y="840.700">3</text>
      </g>
    </svg>
  </div>
</div>

<section class="gl-wprops d-flex flex-column">
  <div class="gl-wprops-title">属性编辑器</div>
  <div class="gl-sheet">
    <table class="table gl-props">
      <colgroup><col width="21"><col width="121"><col></colgroup>
      <thead><tr><th></th><th>属性名称</th><th class="gl-valhead">属性值</th></tr></thead>
      <tbody>
        <tr><td class="gl-num">1</td><td class="gl-nm gl-blue">名称</td><td><span class="gl-key">HJD-1</span></td></tr>
        <tr><td class="gl-num">2</td><td class="gl-nm gl-blue">后浇带宽度<span class="gl-key">(mm)</span></td><td><span class="gl-key">1000</span></td></tr>
        <tr><td class="gl-num">3</td><td class="gl-nm">轴线距后浇带左边</td><td><span class="gl-key">(500)</span></td></tr>
        <tr><td class="gl-num">4</td><td class="gl-nm">计算设置</td><td>按默认计算设置计算</td></tr>
        <tr><td class="gl-num">5</td><td class="gl-nm">节点设置</td><td>按默认节点设置计算</td></tr>
        <tr><td class="gl-num">6</td><td class="gl-nm">搭接设置</td><td>按默认搭接设置计算</td></tr>
        <tr><td class="gl-num">7</td><td class="gl-nm">汇总信息</td><td>后浇带加筋</td></tr>
        <tr><td class="gl-num">8</td><td class="gl-nm">备注</td><td></td></tr>
        <tr><td class="gl-num">9</td><td class="gl-plainhead gl-grey"><span class="gl-rowhead"><span class="gl-pm"></span>筏板(承台)后浇带</span></td><td></td></tr>
        <tr><td class="gl-num gl-active-num">10</td><td class="gl-branch gl-active-nm">后浇带类型</td><td class="gl-active-val">矩形后浇带</td></tr>
        <tr><td class="gl-num">11</td><td class="gl-branch gl-blue">其他加强筋</td><td></td></tr>
        <tr><td class="gl-num">12</td><td class="gl-plainhead gl-grey"><span class="gl-rowhead"><span class="gl-pm gl-plus"></span>现浇板后浇带</span></td><td></td></tr>
        <tr><td class="gl-num">15</td><td class="gl-plainhead gl-grey"><span class="gl-rowhead"><span class="gl-pm gl-plus"></span>外墙后浇带</span></td><td></td></tr>
        <tr><td class="gl-num">18</td><td class="gl-plainhead gl-grey"><span class="gl-rowhead"><span class="gl-pm gl-plus"></span>内墙后浇带</span></td><td></td></tr>
        <tr><td class="gl-num">21</td><td class="gl-plainhead gl-grey"><span class="gl-rowhead"><span class="gl-pm gl-plus"></span>梁后浇带</span></td><td></td></tr>
        <tr><td class="gl-num">27</td><td class="gl-plainhead gl-grey"><span class="gl-rowhead"><span class="gl-pm gl-plus"></span>基础梁后浇带</span></td><td></td></tr>
        <tr><td class="gl-num">33</td><td class="gl-plainhead gl-grey"><span class="gl-rowhead"><span class="gl-pm gl-plus"></span>显示样式</span></td><td></td></tr>
      </tbody>
    </table>
  </div>
  <svg class="gl-preview gl-cad" width="403" height="293" viewBox="175 605 403 293">
    <g fill="none" stroke="#fff">
      <path d="M203.500 738v28l6 3-12 7 6 2v64M551.500 738v30l6 3-12 7 6 2v64"/>
      <path d="M203 747.500h347M203 817.500h347M303.500 733v84M450.500 733v85M303 736h174.700M303.500 739l2-6M450.500 739l2-6M476 739l2-6"/>
      <path d="M277 774.500h38.500V760M277 797.500h37.500v11M485 774.500h-55.500V756l-3-3M485 797.500h-55.500V812l3 3M532.500 747v70M530 745l4 4M530 815l4 4"/>
    </g>
    <path d="M203 751.500h348M203 814.500h348" stroke="#f00" fill="none"/>
    <path d="M278.300 754.700h198.400M278.300 810.700h198.400" stroke="#f00" stroke-width="2" fill="none"/>
    <g fill="#f00">
      <circle cx="293.300" cy="757" r="2"/><circle cx="314.700" cy="757" r="2"/><circle cx="333.700" cy="757" r="2"/><circle cx="354.700" cy="757" r="2"/><circle cx="375.300" cy="757" r="2"/><circle cx="393.300" cy="757" r="2"/><circle cx="414.300" cy="757" r="2"/><circle cx="435.700" cy="757" r="2"/><circle cx="458.700" cy="757" r="2"/>
      <circle cx="293.300" cy="808" r="2"/><circle cx="313.300" cy="808" r="2"/><circle cx="333.700" cy="808" r="2"/><circle cx="354.300" cy="808" r="2"/><circle cx="374.300" cy="808" r="2"/><circle cx="394.700" cy="808" r="2"/><circle cx="414.300" cy="808" r="2"/><circle cx="435.700" cy="808" r="2"/><circle cx="458.700" cy="808" r="2"/>
    </g>
    <g class="gl-m" fill="#00f000" font-size="12">
      <text x="277" y="768" textLength="23" lengthAdjust="spacingAndGlyphs">TFBJ</text>
      <text x="266" y="791" textLength="36" lengthAdjust="spacingAndGlyphs">A8@200</text>
      <text x="451" y="767" textLength="24" lengthAdjust="spacingAndGlyphs">TJQJ</text>
      <text x="452" y="791" textLength="42" lengthAdjust="spacingAndGlyphs">B12@150</text>
      <text x="455" y="725.700" textLength="21" lengthAdjust="spacingAndGlyphs">300</text>
    </g>
    <text class="gl-m" x="364" y="725.700" fill="#fff" font-size="13" textLength="27" lengthAdjust="spacingAndGlyphs">1000</text>
    <text class="gl-m" x="534" y="781.700" fill="#fff" font-size="14">h</text>
  </svg>
</section>

<section class="gl-wparam">
  <div class="gl-wparam-title d-flex align-items-center"><svg width="16" height="16"><use href="#i-param"/></svg>参数化选择</div>
  <div class="gl-wparam-body d-flex">
    <div class="gl-shapes">
      <div class="gl-fieldset">
        <div class="gl-tiles">
          <div class="gl-tile">
            <svg class="gl-cad" width="131" height="140" viewBox="0 0 131 140"><path d="M3 43h126M3 83h126" stroke="#fff" fill="none"/><path d="M29.500 43h74v40h-74z" fill="url(#hatch)" stroke="#fff"/><text x="66" y="119">矩形后浇带</text></svg>
          </div>
          <div class="gl-tile gl-tile-on">
            <svg class="gl-cad" width="131" height="140" viewBox="0 0 131 140"><path d="M0 32h131M0 61h131M66 28v57M69 61v24M16 61l14 22h75l12-22" stroke="#fff" fill="none"/><path d="M36 32h61l1 5-2 4 2 5-2 4 2 5-3 2v6H40v-6l-3-2 1-5-2-4 1-5-1-4z" fill="url(#hatch)" stroke="#fff"/><path d="M33 61h6M58 61h5M82 61h6M109 61h6M66 45v6M66 71v5" stroke="#000" stroke-width="1.500"/><text x="68" y="115">矩形下沉后浇带</text></svg>
          </div>
          <div class="gl-tile">
            <svg class="gl-cad" width="131" height="140" viewBox="0 0 131 140"><path d="M1 45h129M1 74h129M69.500 40v57M72 74v23M18 74l14 23h74l14-23" stroke="#fff" fill="none"/><path d="M39.700 45H98v10l6.700 5v3.300l-6.700 5v9.400H39.700v-9.400L33 63.300v-5l6.700-5z" fill="url(#hatch)" stroke="#fff"/><path d="M35 74h6M57 74h5M83 74h6M107 74h6M69.500 56v6M69.500 84v5" stroke="#000" stroke-width="1.500"/><text x="66" y="119">槽形下沉后浇带</text></svg>
          </div>
          <div class="gl-tile">
            <svg class="gl-cad" width="131" height="140" viewBox="0 0 131 140"><path d="M0 37.500h131M0 66.500h131M66.500 34v55M69 66v23M15 66.500 30 89h75l12-22.500" stroke="#fff" fill="none"/><path d="M30.500 37.500h71v18h-5V69h-60V55.500h-6z" fill="url(#hatch)" stroke="#fff"/><path d="M33 66.500h6M58 66.500h5M82 66.500h6M106 66.500h6M66.500 50v6M66.500 75v5" stroke="#000" stroke-width="1.500"/><text x="66" y="118">阶梯下沉后浇带</text></svg>
          </div>
          <div class="gl-tile">
            <svg class="gl-cad" width="131" height="140" viewBox="0 0 131 140"><path d="M0 34.500h131M0 63.500h131M67.500 30v56M70 63v23M16.500 63.500l15 22h74l13.500-22" stroke="#fff" fill="none"/><path d="M33 35h70.500L98 50l5.500 16H31.500L38 50z" fill="url(#hatch)" stroke="#fff"/><path d="M33 63.500h6M57 63.500h5M81 63.500h6M105 63.500h6M67.500 48v6M67.500 73v5" stroke="#000" stroke-width="1.500"/><text x="68" y="114">内角下沉后浇带</text></svg>
          </div>
          <div class="gl-tile">
            <svg class="gl-cad" width="131" height="140" viewBox="0 0 131 140"><path d="M0 31.500h131M0 60.500h131M66.500 28v55M69 60v23M15 60.500l15 22h74l14-22" stroke="#fff" fill="none"/><path d="M30 32h74l5 15-5 16H31l-7-16z" fill="url(#hatch)" stroke="#fff"/><path d="M33 60.500h6M57 60.500h5M81 60.500h6M105 60.500h6M66.500 46v5M66.500 71v5" stroke="#000" stroke-width="1.500"/><text x="66" y="112">外角下沉后浇带</text></svg>
          </div>
        </div>
      </div>
      <span class="gl-legend">图形</span>
    </div>
    <div class="gl-panel d-flex flex-column">
      <div class="gl-radios d-flex align-items-center">
        <span class="gl-radio"></span><span class="gl-radiolabel">角度放坡形式</span>
        <span class="gl-radio gl-radio-on"></span><span>底宽放坡形式</span>
      </div>
      <svg class="gl-drawing gl-cad" width="535" height="437" viewBox="759 149 535 437">
        <g fill="none" stroke="#fff">
          <path d="M772 209v74l11.600 4-23.600 12 12 4v70"/>
          <path d="M772 236.500h522M987.500 191.700v44.800"/>
          <path d="M1035.500 220.500h205M1035.500 212.700V228M1176.500 210v18M1240.500 210v17M1033 224l5-8M1174 224l5-8M1238 224l5-8"/>
          <path d="M1030 237l5 4-5 4 5 4-5 4 5 4-5 4 5 4-5 4 5 4-5 4 5 4-5 4 5 4-5 4 5 4-5 4 5 4-5 4 5 4-5 4 5 4-5 4 5 4"/>
          <path d="M1177 237l5 4-5 4 5 4-5 4 5 4-5 4 5 4-5 4 5 4-5 4 5 4-5 4 5 4-5 4 5 4-5 4 5 4-5 4 5 4-5 4 5 4-5 4 5 4"/>
          <path d="M912.500 273.500H1046V255M911 305.500h136.500V320M1132 278.500h-67.500V248l-3-3M1130.500 310.500h-66V325l3 3"/>
          <path d="M781 257h35l51 71M781 250v14"/>
          <path d="M772 338.500h516" stroke-dasharray="18 6"/>
          <path d="M1105 236v246" stroke-dasharray="14 4 2 4"/>
          <path d="M1034 333v27.500h141.800V333M1091.500 360v112.500M1119.500 360v112.500M1188.500 338v24M1185 338h8M1185 361.500h8"/>
          <path d="M873.500 370.500h207M873.500 364v12M1080.500 364v12"/>
          <path d="M839.400 339 939 472.500H1272.500L1294 443"/>
          <path d="M942.600 395h130M942.600 395l3-12M985 395l3-12M1030 395l3-12M1072.500 395l3-12M1060.600 395v11.500H1164"/>
          <path d="M953 442.500h125.700M953 442.500l-8 16M1032 442.500l-3 15M1076 442.500l-3 15M1060.600 442v-9.500h107M982 427.500h73.400M985 431.700l17.400-6.700"/>
          <path d="M899 387.500h13l27 35h-22M861 403.500h63.500M861 442.500h66M932 438l-7.500 8"/>
          <path d="M836.500 491.500h283M836.500 483v17M939.200 483v17M1029.800 483v17M1091.300 483v17M1119.400 483v17M834 497l5-11M937 497l5-11M1027 497l5-11M1089 497l5-11M1117 497l5-11"/>
        </g>
        <path d="M772 240h522M772 333.500h522" stroke="#f00" fill="none"/>
        <path d="M781 270h19l81 108" stroke="#f00" fill="none"/>
        <path d="M970 248.700h270M970 326h270" stroke="#f00" stroke-width="2" fill="none"/>
        <path d="M874 370l68.600 91.700h137.800V378H876" stroke="#f00" stroke-width="2" fill="none"/>
        <path d="M993 245v217" stroke="#ff0" stroke-width="2" fill="none"/>
        <path d="M982 246v-2a5.500 5.500 0 0 1 11 0M982 457v5h10" stroke="#ff0" stroke-width="2" fill="none"/>
        <g fill="#f00">
          <circle cx="987.400" cy="243.300" r="4"/>
          <circle cx="1005.500" cy="252.700" r="3.500"/><circle cx="1045.500" cy="252.700" r="3.500"/><circle cx="1085.500" cy="252.700" r="3.500"/><circle cx="1122" cy="252.700" r="3.500"/><circle cx="1162" cy="252.700" r="3.500"/><circle cx="1206" cy="252.700" r="3.500"/>
          <circle cx="1005" cy="321.700" r="3.500"/><circle cx="1046.500" cy="321.700" r="3.500"/><circle cx="1085.500" cy="321.700" r="3.500"/><circle cx="1122" cy="321.700" r="3.500"/><circle cx="1162.400" cy="321.700" r="3.500"/><circle cx="1204" cy="321.700" r="3.500"/>
          <circle cx="838" cy="314.300" r="4"/><circle cx="866.400" cy="352.300" r="4"/><circle cx="892" cy="387.300" r="4"/><circle cx="918" cy="422.300" r="4"/>
          <circle cx="903.300" cy="382.300" r="4"/><circle cx="945" cy="382.300" r="4"/><circle cx="987" cy="382.300" r="4"/><circle cx="1032" cy="382.300" r="4"/><circle cx="1076" cy="382.300" r="4"/>
          <circle cx="945" cy="457.700" r="4"/><circle cx="987" cy="457.700" r="4"/><circle cx="1032" cy="457.700" r="4"/><circle cx="1076" cy="457.700" r="4"/>
        </g>
        <g class="gl-s" fill="#00e000" font-size="24">
          <text x="966.500" y="184" textLength="42" lengthAdjust="spacingAndGlyphs">1C12</text>
          <text x="1191.500" y="200" textLength="38.500" lengthAdjust="spacingAndGlyphs" font-size="26">LAE</text>
          <text x="912.500" y="262.700" textLength="43.500" lengthAdjust="spacingAndGlyphs">TFBJ</text>
          <text x="1067.400" y="268" textLength="42.600" lengthAdjust="spacingAndGlyphs">TJQJ</text>
          <text x="912.500" y="294" textLength="64.500" lengthAdjust="spacingAndGlyphs">A8@200</text>
          <text x="1068" y="299" textLength="76" lengthAdjust="spacingAndGlyphs">B12@150</text>
          <text x="1204" y="350.700">0</text>
          <text x="965" y="358">L</text>
          <text x="1122" y="396" textLength="76" lengthAdjust="spacingAndGlyphs">C12@200</text>
          <text x="1125.500" y="422.700" textLength="76" lengthAdjust="spacingAndGlyphs">C12@200</text>
          <text x="1002.400" y="419" textLength="76.300" lengthAdjust="spacingAndGlyphs">C12@200</text>
          <text x="777.500" y="403.300" textLength="75.500" lengthAdjust="spacingAndGlyphs">C12@200</text>
          <text x="776" y="442.300" textLength="76" lengthAdjust="spacingAndGlyphs">C12@200</text>
          <text x="864" y="511.700" textLength="31.400" lengthAdjust="spacingAndGlyphs">350</text>
          <text x="961.400" y="510" textLength="30.600" lengthAdjust="spacingAndGlyphs">300</text>
          <text x="1094" y="510" textLength="20" lengthAdjust="spacingAndGlyphs">50</text>
        </g>
        <text class="gl-s" x="1091" y="202.700" fill="#fff" font-size="22" textLength="41" lengthAdjust="spacingAndGlyphs">1000</text>
        <text class="gl-c" x="859" y="291" fill="#fff" font-size="19" letter-spacing="3" text-anchor="middle" transform="rotate(52 859 291)">取节点设置</text>
        <text class="gl-c" x="983.600" y="549" fill="#fff" font-size="24" font-weight="300" textLength="244" lengthAdjust="spacing">矩形下沉后浇带配筋1</text>
      </svg>
    </div>
  </div>
  <div class="gl-footer d-flex">
    <button type="button" class="btn gl-xpbtn">配筋形式</button>
    <button type="button" class="btn gl-xpbtn gl-ok">确定</button>
  </div>
</section>

<svg class="gl-notes" width="1294" height="898" viewBox="0 0 1294 898">
  <g fill="none">
    <ellipse cx="361" cy="440" rx="40" ry="19.500" stroke="#e85a5a"/>
    <ellipse cx="661" cy="361" rx="96" ry="182" stroke="#e85050"/>
    <ellipse cx="1064" cy="354" rx="98.500" ry="129.500" stroke="#a83232"/>
  </g>
  <path d="M401 437.500 559 391l-1-3 10 2.500-7.500 7-.5-3.500-158.500 44.500z" fill="#f04848"/>
  <path d="M761 340.500 957 329v-3l10 4.500-9 5.500v-3l-197 8z" fill="#f04848"/>
</svg>

<script src="https://cdn.jsdelivr.net/npm/bootstrap@5.3.2/dist/js/bootstrap.bundle.min.js"></script>
</body>
</html>
